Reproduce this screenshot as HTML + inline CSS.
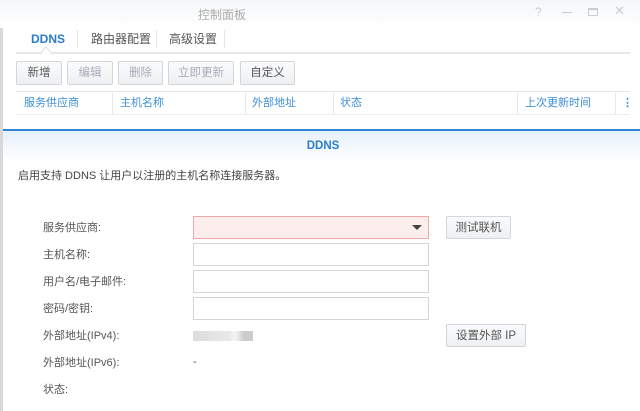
<!DOCTYPE html>
<html><head><meta charset="utf-8"><style>
*{box-sizing:border-box;margin:0;padding:0}
body{width:640px;height:411px;overflow:hidden;background:#fff;position:relative;font-family:"Liberation Sans","Noto Sans CJK SC",sans-serif;font-size:11px;color:#444}
.a{position:absolute}
.title{left:0;top:0;width:640px;height:28px;background:linear-gradient(#f4f6f8,#fff)}
.lb{left:0;top:28px;width:3px;height:383px;background:#d8d8d8}
.tab{top:26px;height:26px;line-height:26px;font-size:12px;color:#555}
.btn{top:61px;height:24px;line-height:22px;border:1px solid #d2d6da;border-radius:2px;background:linear-gradient(#fafbfc,#eef0f2);text-align:center;font-size:11.5px;color:#555}
.dis{color:#aab}
.th{top:91px;height:24px;line-height:24px;color:#3d8fd6;font-size:11px}
.sep{top:93px;width:1px;height:21px;background:#e6e8ea}
.lab{left:43px;font-size:11px;color:#555}
.inp{left:193px;width:236px;height:23px;border:1px solid #d3d6d9;background:#fff}
</style></head><body>
<div class="a title"></div>
<div class="a" style="left:198px;top:6px;font-size:12px;color:#aaa">控制面板</div>
<div class="a" style="left:535px;top:5px;color:#ccc;font-size:12px">?</div>
<div class="a" style="left:562px;top:12px;width:10px;height:1px;background:#ccc"></div>
<div class="a" style="left:588px;top:8px;width:10px;height:8px;border:1px solid #ccc;border-top-width:2px"></div>
<div class="a" style="left:614px;top:3px;color:#ccc;font-size:13px">✕</div>
<div class="a lb"></div>
<div class="a tab" style="left:31px;color:#2a7ccc;font-weight:bold;font-size:12px">DDNS</div>
<div class="a" style="left:77px;top:30px;width:1px;height:18px;background:#e2e4e6"></div>
<div class="a tab" style="left:91px">路由器配置</div>
<div class="a" style="left:156px;top:30px;width:1px;height:18px;background:#e2e4e6"></div>
<div class="a tab" style="left:169px">高级设置</div>
<div class="a" style="left:224px;top:30px;width:1px;height:18px;background:#e2e4e6"></div>
<div class="a" style="left:16px;top:52px;width:614px;height:2px;background:#e4e6e8"></div>
<div class="a" style="left:42px;top:48px;width:8px;height:8px;background:#fff;border-left:1px solid #dcdfe2;border-top:1px solid #dcdfe2;transform:rotate(45deg)"></div>
<div class="a btn" style="left:16px;width:46px">新增</div>
<div class="a btn dis" style="left:67px;width:46px">编辑</div>
<div class="a btn dis" style="left:118px;width:45px">删除</div>
<div class="a btn dis" style="left:168px;width:66px">立即更新</div>
<div class="a btn" style="left:240px;width:55px">自定义</div>
<div class="a" style="left:16px;top:91px;width:614px;height:1px;background:#e4e6e8"></div>
<div class="a" style="left:16px;top:114px;width:614px;height:1px;background:#eceef0"></div>
<div class="a th" style="left:24px">服务供应商</div>
<div class="a sep" style="left:112px"></div>
<div class="a th" style="left:120px">主机名称</div>
<div class="a sep" style="left:245px"></div>
<div class="a th" style="left:252px">外部地址</div>
<div class="a sep" style="left:333px"></div>
<div class="a th" style="left:340px">状态</div>
<div class="a sep" style="left:517px"></div>
<div class="a th" style="left:525px">上次更新时间</div>
<div class="a sep" style="left:615px"></div>
<div class="a th" style="left:622px;font-weight:bold">⋮</div>
<div class="a" style="left:3px;top:129px;width:637px;height:2px;background:#2f86d6"></div>
<div class="a" style="left:3px;top:131px;width:637px;height:30px;background:linear-gradient(#e6f0fa,#fff)"></div>
<div class="a" style="left:0;top:140px;width:640px;text-align:center;font-weight:bold;color:#2a7ccc;font-size:11.5px;padding-left:6px">DDNS</div>
<div class="a" style="left:18px;top:167px;font-size:11px;color:#444">启用支持 DDNS 让用户以注册的主机名称连接服务器。</div>
<div class="a lab" style="top:219px">服务供应商:</div>
<div class="a inp" style="top:216px;background:#fdeeee;border-color:#f0a8a8"></div>
<div class="a" style="left:412px;top:225px;width:0;height:0;border-left:5px solid transparent;border-right:5px solid transparent;border-top:5px solid #444"></div>
<div class="a btn" style="left:446px;top:216px;width:65px;height:23px">测试联机</div>
<div class="a lab" style="top:246px">主机名称:</div>
<div class="a inp" style="top:243px"></div>
<div class="a lab" style="top:273px">用户名/电子邮件:</div>
<div class="a inp" style="top:270px"></div>
<div class="a lab" style="top:300px">密码/密钥:</div>
<div class="a inp" style="top:297px"></div>
<div class="a lab" style="top:327px">外部地址(IPv4):</div>
<div class="a" style="left:193px;top:331px;width:60px;height:10px;background:linear-gradient(90deg,#ddd,#e8e8e8 60%,#f4f4f4 70%,#ccc 85%,#ccc)"></div>
<div class="a btn" style="left:446px;top:324px;width:80px;height:23px">设置外部 IP</div>
<div class="a lab" style="top:354px">外部地址(IPv6):</div>
<div class="a" style="left:193px;top:356px;color:#555">-</div>
<div class="a lab" style="top:381px">状态:</div>
</body></html>
